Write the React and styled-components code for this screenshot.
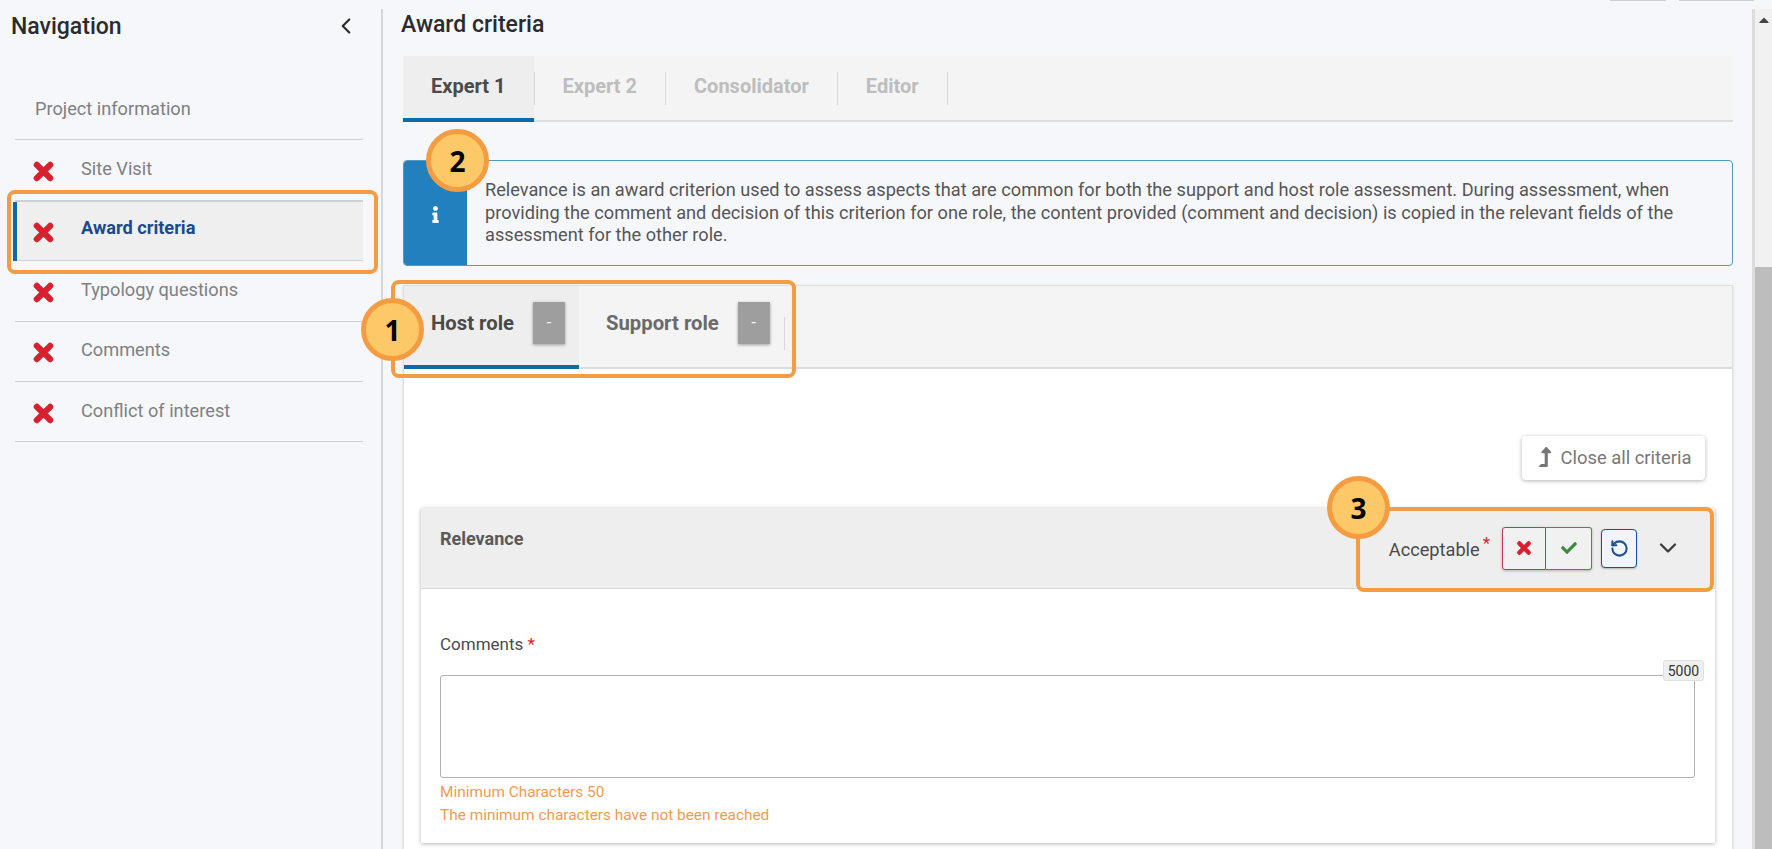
import { Fragment } from "react";
import styled, { createGlobalStyle } from "styled-components";
import { ChevronLeft, ChevronDown, RotateCcw } from "lucide-react";
import { FaCheck, FaInfo, FaLevelUpAlt, FaCaretUp } from "react-icons/fa";

const GlobalStyle = createGlobalStyle`
  html, body {
    margin: 0;
    padding: 0;
    background: #f5f7fb;
  }
  * {
    box-sizing: border-box;
  }
  body {
    font-family: Roboto, "Liberation Sans", sans-serif;
  }
`;

const orange = "#f49c42";

// page frame
const Page = styled.div`
  width: 1772px;
  height: 849px;
  overflow: hidden;
  display: flex;
  flex-direction: column;
`;

const TopStrip = styled.div`
  height: 9px;
  flex: none;
  display: flex;
  justify-content: flex-end;
  gap: 13px;
  padding-right: 18px;
`;

const TopStub = styled.div`
  width: ${(p) => p.$w}px;
  height: 1px;
  background: #cfcfcf;
`;

const Columns = styled.div`
  flex: 1;
  display: flex;
  min-height: 0;
`;

// chunky cross used in the nav and the decision button
const CrossSvg = ({ size, className }) => (
  <svg className={className} width={size} height={size} viewBox="0 0 20 20" fill="none">
    <path
      d="M4.2 4.2L15.8 15.8M15.8 4.2L4.2 15.8"
      stroke="currentColor"
      strokeWidth="5.4"
      strokeLinecap="round"
    />
  </svg>
);

// left navigation
const Sidebar = styled.aside`
  width: 383px;
  flex: none;
  padding: 0 18px 0 15px;
  border-right: 2px solid #d4d7dc;
`;

const SideHead = styled.div`
  height: 71px;
  margin-left: -4px;
  padding: 4px 4px 0 0;
  display: flex;
  align-items: flex-start;
  justify-content: space-between;
  color: #2b2b2b;
`;

const SideTitle = styled.h2`
  margin: 0;
  font-size: 23px;
  line-height: 28px;
  font-weight: 500;
`;

const NavRow = styled.div`
  position: relative;
  height: 60.4px;
  display: flex;
  align-items: center;
  padding-left: ${(p) => (p.$plain ? 20 : 17)}px;
  gap: 26px;
  border-bottom: 1px solid #cdd0d4;
  font-size: 18.2px;
  color: ${(p) => (p.$active ? "#1b4a8c" : "#808080")};
  font-weight: ${(p) => (p.$active ? 700 : 400)};
  background: ${(p) => (p.$active ? "#efefef" : "transparent")};
  ${(p) => p.$active && "border-top: 1px solid #cdd0d4;"}
  ${(p) =>
    p.$active &&
    `&::before {
      content: "";
      position: absolute;
      left: -2px;
      top: 0;
      bottom: -1px;
      width: 4px;
      background: #0e6aa6;
    }`}
`;

const NavMark = styled(CrossSvg)`
  flex: none;
  margin-top: 3px;
  color: #d9202f;
`;

const NavLabel = styled.span`
  padding-bottom: ${(p) => p.$lift}px;
`;

// orange annotation frames and numbered bubbles
const Frame = styled.div`
  position: absolute;
  left: ${(p) => p.$l}px;
  top: ${(p) => p.$t}px;
  width: ${(p) => p.$w}px;
  height: ${(p) => p.$h}px;
  border: 4px solid ${orange};
  border-radius: 8px;
  z-index: 5;
  pointer-events: none;
`;

const Bubble = styled.div`
  position: absolute;
  left: ${(p) => p.$l}px;
  top: ${(p) => p.$t}px;
  width: 63px;
  height: 63px;
  border-radius: 50%;
  background: #fdc867;
  border: 5px solid ${orange};
  display: flex;
  align-items: center;
  justify-content: center;
  font-family: "Open Sans", sans-serif;
  font-size: 28px;
  font-weight: 700;
  color: #000;
  z-index: 6;
`;

// main column
const Main = styled.main`
  flex: 1;
  min-width: 0;
  padding: 0 19px 0 20px;
`;

const PageTitle = styled.h1`
  margin: 0;
  height: 47px;
  margin-left: -2px;
  padding-top: 2px;
  font-size: 23px;
  line-height: 28px;
  font-weight: 500;
  color: #2b2b2b;
`;

const TabBar = styled.div`
  display: flex;
  align-items: center;
  height: ${(p) => (p.$role ? 83 : 66)}px;
  background: #f4f4f4;
  border-bottom: 2px solid #dcdcdc;
`;

const Tab = styled.div`
  display: flex;
  align-items: center;
  gap: 19px;
  padding: ${(p) => (p.$role ? "0 14px 6px 27px" : "0 28px 2px")};
  font-size: ${(p) => (p.$role ? 20.3 : 20)}px;
  font-weight: 700;
  color: ${(p) => (p.$active ? "#4a4a4a" : p.$muted ? "#bdbdbd" : "#6a6a6a")};
  background: ${(p) => (p.$active ? "#eeeeee" : "transparent")};
  border-bottom: 4px solid ${(p) => (p.$active ? "#0e6aa6" : "transparent")};
  margin-bottom: -2px;
  height: calc(100% + 2px);
`;

const TabSep = styled.span`
  width: 1px;
  height: 33px;
  flex: none;
  background: #d8d8d8;
  margin-top: ${(p) => (p.$role ? 14 : 0)}px;
`;

const ScoreBadge = styled.span`
  width: 32px;
  height: 42px;
  display: flex;
  align-items: center;
  justify-content: center;
  background: #9e9e9e;
  color: #fff;
  font-size: 16px;
  font-weight: 400;
  box-shadow: 0 1px 3px rgba(0, 0, 0, 0.35);
`;

const InfoBox = styled.div`
  position: relative;
  height: 106px;
  margin: 38px 0 19px;
  display: flex;
  border: 1px solid #5b97b8;
  border-radius: 4px;
`;

const InfoSide = styled.div`
  width: 63px;
  flex: none;
  display: flex;
  align-items: center;
  justify-content: center;
  padding-top: 3px;
  background: #2280bf;
  color: #fff;
  border-radius: 3px 0 0 3px;
`;

const InfoText = styled.p`
  margin: 0;
  padding: 18px 40px 0 18px;
  font-size: 18.2px;
  line-height: 22.5px;
  color: #555;
`;

const RoleCard = styled.section`
  position: relative;
  height: 620px;
  background: #fff;
  border: 1px solid #e0e0e0;
  box-shadow: 0 1px 3px rgba(0, 0, 0, 0.12);
`;

const CardTools = styled.div`
  display: flex;
  justify-content: flex-end;
  padding: 67px 27px 28px 0;
`;

const GhostButton = styled.button`
  width: 183px;
  height: 44px;
  padding: 0 0 2px;
  display: flex;
  align-items: center;
  justify-content: center;
  gap: 5px;
  border: none;
  border-radius: 4px;
  background: #fff;
  color: #777;
  font: 400 18.4px Roboto, sans-serif;
  box-shadow: 0 1px 4px rgba(0, 0, 0, 0.3);
`;

const Panel = styled.div`
  margin: 0 17px 0 17px;
  height: 335px;
  box-shadow: 0 1px 4px rgba(0, 0, 0, 0.3);
  background: #fff;
`;

const PanelHead = styled.div`
  position: relative;
  height: 81px;
  display: flex;
  justify-content: space-between;
  background: #eeeeee;
  border-bottom: 1px solid #d8d8d8;
  padding: 0 33px 0 19px;
`;

const PanelTitle = styled.div`
  padding-top: 19px;
  font-size: 18px;
  line-height: 24px;
  font-weight: 700;
  color: #595959;
`;

const Decision = styled.div`
  display: flex;
  align-items: center;
`;

const DecisionLabel = styled.span`
  font-size: 18.2px;
  color: #4a4a4a;
  padding-top: 3px;
`;

const Star = styled.span`
  color: #e0202f;
  font-size: 17px;
  margin-left: ${(p) => p.$gap || 0}px;
  position: relative;
  top: ${(p) => p.$up || 0}px;
`;

const SplitGroup = styled.div`
  display: flex;
  height: 43px;
  margin: 0 9px 0 12px;
  border-radius: 3px;
  box-shadow: 0 1px 3px rgba(0, 0, 0, 0.25);
`;

const SplitButton = styled.button`
  display: flex;
  align-items: center;
  justify-content: center;
  padding: 0;
  width: ${(p) => p.$w}px;
  background: #f1f1f1;
  border: 1.5px solid ${(p) => p.$line};
  border-left-width: ${(p) => (p.$joined ? 0 : 1.5)}px;
  border-radius: ${(p) => (p.$joined ? "0 3px 3px 0" : "3px 0 0 3px")};
  color: ${(p) => p.$tone};
`;

const ResetButton = styled.button`
  width: 36px;
  height: 39px;
  padding: 0;
  display: flex;
  align-items: center;
  justify-content: center;
  background: #f1f5fa;
  border: 1.5px solid #1d4f91;
  border-radius: 4px;
  color: #1d4f91;
  box-shadow: 0 1px 2px rgba(0, 0, 0, 0.25);
`;

const ExpandIcon = styled(ChevronDown)`
  margin-left: 17px;
  color: #3c3c3c;
`;

const PanelBody = styled.div`
  padding: 0 20px 0 19px;
`;

const FieldLabel = styled.div`
  padding-top: 43px;
  height: 86px;
  font-size: 17px;
  line-height: 24px;
  color: #4a4a4a;
`;

const FieldWrap = styled.div`
  position: relative;
  height: 103px;
  margin-bottom: 3px;
`;

const Area = styled.textarea`
  display: block;
  width: 100%;
  height: 100%;
  resize: none;
  background: #fff;
  border: 1.5px solid #b0b0b0;
  border-radius: 3px;
  outline: none;
`;

const Counter = styled.span`
  position: absolute;
  right: -9px;
  top: -15px;
  width: 41px;
  height: 21px;
  display: flex;
  align-items: center;
  justify-content: center;
  font-size: 14px;
  color: #333;
  background: #f0f0f0;
  border: 1px solid #e0e0e0;
  border-radius: 3px;
`;

const Hint = styled.div`
  font-size: 15.4px;
  line-height: 23px;
  color: #ef9b50;
`;

// fake browser scrollbar
const ScrollBar = styled.div`
  width: 20px;
  flex: none;
  display: flex;
  flex-direction: column;
  background: #f1f1f1;
  border-left: 3px solid #dcdcdc;
`;

const ScrollArrow = styled.div`
  height: 258px;
  padding-top: 3px;
  color: #444;
  display: flex;
  justify-content: center;
  align-items: flex-start;
`;

const ScrollThumb = styled.div`
  flex: 1;
  background: #bdbdbd;
`;

const navItems = [
  { label: "Site Visit", lift: 3 },
  { label: "Award criteria", lift: 6, active: true },
  { label: "Typology questions", lift: 3 },
  { label: "Comments", lift: 3 },
  { label: "Conflict of interest", lift: 3 },
];

const topTabs = ["Expert 2", "Consolidator", "Editor"];

export default function App() {
  return (
    <Page>
      <GlobalStyle />
      <TopStrip>
        <TopStub $w={56} />
        <TopStub $w={75} />
      </TopStrip>
      <Columns>
        <Sidebar>
          <SideHead>
            <SideTitle>Navigation</SideTitle>
            <ChevronLeft size={26} strokeWidth={2} />
          </SideHead>
          <NavRow $plain>
            <NavLabel $lift={3}>Project information</NavLabel>
          </NavRow>
          {navItems.map((item) => (
            <NavRow key={item.label} $active={item.active}>
              <NavMark size={23} />
              <NavLabel $lift={item.lift}>{item.label}</NavLabel>
              {item.active && <Frame $l={-8} $t={-12} $w={371} $h={84} />}
            </NavRow>
          ))}
        </Sidebar>

        <Main>
          <PageTitle>Award criteria</PageTitle>
          <TabBar>
            <Tab $active>Expert 1</Tab>
            <TabSep />
            {topTabs.map((name) => (
              <Fragment key={name}>
                <Tab $muted>{name}</Tab>
                <TabSep />
              </Fragment>
            ))}
          </TabBar>

          <InfoBox>
            <Bubble $l={22} $t={-32}>2</Bubble>
            <InfoSide>
              <FaInfo size={17} />
            </InfoSide>
            <InfoText>
              Relevance is an award criterion used to assess aspects that are common for both the
              support and host role assessment. During assessment, when providing the comment and
              decision of this criterion for one role, the content provided (comment and decision)
              is copied in the relevant fields of the assessment for the other role.
            </InfoText>
          </InfoBox>

          <RoleCard>
            <Frame $l={-13} $t={-6} $w={405} $h={98} />
            <Bubble $l={-43} $t={12}>1</Bubble>
            <TabBar $role>
              <Tab $role $active>
                Host role
                <ScoreBadge>-</ScoreBadge>
              </Tab>
              <Tab $role>
                Support role
                <ScoreBadge>-</ScoreBadge>
              </Tab>
              <TabSep $role />
            </TabBar>
            <CardTools>
              <GhostButton>
                <FaLevelUpAlt size={20} />
                Close all criteria
              </GhostButton>
            </CardTools>
            <Panel>
              <PanelHead>
                <PanelTitle>Relevance</PanelTitle>
                <Decision>
                  <DecisionLabel>Acceptable</DecisionLabel>
                  <Star $gap={3} $up={-5}>*</Star>
                  <SplitGroup>
                    <SplitButton $w={44} $line="#c0394f" $tone="#d9202f">
                      <CrossSvg size={16} />
                    </SplitButton>
                    <SplitButton $w={46} $line="#4c8a50" $tone="#3e8a3e" $joined>
                      <FaCheck size={16} />
                    </SplitButton>
                  </SplitGroup>
                  <ResetButton>
                    <RotateCcw size={19} strokeWidth={2.6} />
                  </ResetButton>
                  <ExpandIcon size={28} strokeWidth={2} />
                </Decision>
                <Frame $l={935} $t={-1} $w={358} $h={85} />
                <Bubble $l={906} $t={-32}>3</Bubble>
              </PanelHead>
              <PanelBody>
                <FieldLabel>
                  Comments <Star>*</Star>
                </FieldLabel>
                <FieldWrap>
                  <Area />
                  <Counter>5000</Counter>
                </FieldWrap>
                <Hint>Minimum Characters 50</Hint>
                <Hint>The minimum characters have not been reached</Hint>
              </PanelBody>
            </Panel>
          </RoleCard>
        </Main>

        <ScrollBar>
          <ScrollArrow>
            <FaCaretUp size={16} />
          </ScrollArrow>
          <ScrollThumb />
        </ScrollBar>
      </Columns>
    </Page>
  );
}
